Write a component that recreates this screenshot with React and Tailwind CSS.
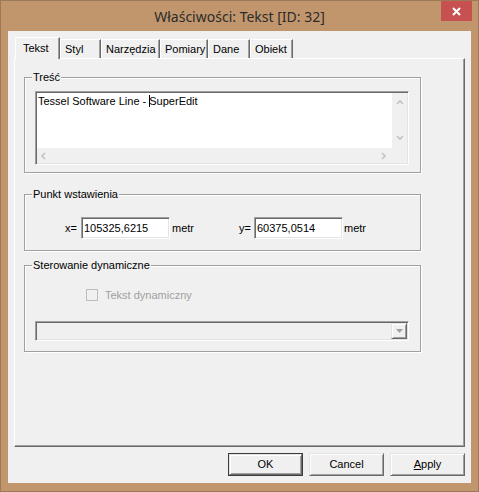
import React from "react";

const tabs = [
  { label: "Tekst", w: "w-[45px]", active: true },
  { label: "Styl", w: "w-[41px]" },
  { label: "Narzędzia", w: "w-[59px]" },
  { label: "Pomiary", w: "w-[48px]" },
  { label: "Dane", w: "w-[42px]" },
  { label: "Obiekt", w: "w-[43px]" },
];

const sunken =
  "border border-t-[#a0a0a0] border-l-[#a0a0a0] border-b-white border-r-white shadow-[inset_1px_1px_0_#696969,inset_-1px_-1px_0_#e3e3e3]";

const raised =
  "border border-t-[#e3e3e3] border-l-[#e3e3e3] border-b-[#696969] border-r-[#696969] shadow-[inset_1px_1px_0_#fff,inset_-1px_-1px_0_#a0a0a0]";

const Chevron = ({ dir }) => {
  const pts = {
    up: "1,5 4,2 7,5",
    down: "1,2 4,5 7,2",
    left: "5,1 2,4 5,7",
    right: "2,1 5,4 2,7",
  }[dir];
  return (
    <svg width="8" height="8" viewBox="0 0 8 8" className="block">
      <polyline points={pts} fill="none" stroke="#c2c2c2" strokeWidth="1.6" />
    </svg>
  );
};

const Group = ({ label, className, children }) => (
  <div
    className={`ml-[9px] w-[397px] border border-[#a0a0a0] shadow-[inset_1px_1px_0_#fff,1px_1px_0_#fff] ${className}`}
  >
    <div className="-mt-[7px] ml-[7px] w-fit bg-[#f0f0f0] px-[1px] leading-[13px]">{label}</div>
    {children}
  </div>
);

const Input = ({ value }) => (
  <div className={`w-[89px] h-[22px] bg-white ${sunken} pl-[2px] flex items-center`}>
    {value}
  </div>
);

export default function App() {
  return (
    <div
      className="w-[479px] h-[492px] bg-[#c2966d] border border-[#9c7a59] flex flex-col text-[11px] text-black"
      style={{ fontFamily: '"Liberation Sans", Arial, sans-serif' }}
    >
      {/* title bar */}
      <div className="h-[30px] flex items-start">
        <div
          className="flex-1 pl-[37px] h-[30px] flex items-center justify-center text-[14px] text-[#2b2b2b]"
          style={{ fontFamily: '"Noto Sans", "Open Sans", sans-serif' }}
        >
          Właściwości: Tekst [ID: 32]
        </div>
        <div className="w-[31px] h-[20px] bg-[#c75050] flex items-center justify-center mr-[6px]">
          <svg width="9" height="9" viewBox="0 0 9 9">
            <path d="M1 1 L8 8 M8 1 L1 8" stroke="#fff" strokeWidth="2" />
          </svg>
        </div>
      </div>

      {/* client */}
      <div className="ml-[7px] w-[463px] h-[452px] bg-[#f0f0f0] pt-[6px] pl-[6px]">
        {/* tabs */}
        <div className="flex items-end h-[21px] pl-[1px] relative z-10">
          {tabs.map((t) =>
            t.active ? (
              <div
                key={t.label}
                className={`${t.w} h-[22px] -mb-[1px] bg-[#f0f0f0] border-t border-l border-white border-r border-r-[#696969] shadow-[inset_-1px_0_0_#a0a0a0] pl-[7px] pt-[4px] leading-[13px]`}
              >
                {t.label}
              </div>
            ) : (
              <div
                key={t.label}
                className={`${t.w} h-[19px] bg-[#f0f0f0] border-t border-l border-white border-r border-r-[#696969] shadow-[inset_-1px_0_0_#a0a0a0] pl-[4px] pt-[3px] leading-[13px]`}
              >
                {t.label}
              </div>
            )
          )}
        </div>

        {/* panel */}
        <div className="w-[451px] h-[389px] border border-white border-r-[#696969] border-b-[#696969] shadow-[inset_-1px_-1px_0_#a0a0a0] pt-[18px]">
          <Group label="Treść" className="h-[96px]">
            <div className={`ml-[10px] mt-[7px] w-[374px] h-[74px] ${sunken} p-[1px] flex flex-col`}>
              <div className="flex h-[55px]">
                <div className="flex-1 bg-white pl-[1px] pt-[2px] leading-[13px]">
                  Tessel Software Line -{" "}
                  <span className="inline-block w-[1px] h-[12px] bg-black align-[-2px] -mr-[1px]" />
                  SuperEdit
                </div>
                <div className="w-[15px] flex flex-col items-center justify-between pt-[6px] pb-[6px]">
                  <Chevron dir="up" />
                  <Chevron dir="down" />
                </div>
              </div>
              <div className="flex h-[15px] items-center">
                <div className="flex-1 flex items-center justify-between pl-[3px] pr-[4px]">
                  <Chevron dir="left" />
                  <Chevron dir="right" />
                </div>
                <div className="w-[15px]" />
              </div>
            </div>
          </Group>

          <Group label="Punkt wstawienia" className="mt-[21px] h-[57px]">
            <div className="mt-[16px] pl-[40px] flex items-center">
              <span className="w-[16px]">x=</span>
              <Input value="105325,6215" />
              <span className="w-[69px] pl-[2px]">metr</span>
              <span className="w-[15px]">y=</span>
              <Input value="60375,0514" />
              <span className="pl-[1px]">metr</span>
            </div>
          </Group>

          <Group label="Sterowanie dynamiczne" className="mt-[14px] h-[87px]">
            <div className="mt-[15px] ml-[61px] flex items-center">
              <div className="w-[12px] h-[12px] border border-[#bcbcbc] bg-[#f0f0f0]" />
              <span className="ml-[7px] text-[#a0a0a0]">Tekst dynamiczny</span>
            </div>
            <div className={`ml-[10px] mt-[17px] w-[374px] h-[20px] ${sunken} p-[1px] flex justify-end`}>
              <div className={`w-[16px] h-[16px] ${raised} flex items-center justify-center`}>
                <svg width="7" height="4" viewBox="0 0 7 4">
                  <polygon points="0,0 7,0 3.5,4" fill="#a0a0a0" />
                </svg>
              </div>
            </div>
          </Group>
        </div>

        {/* buttons */}
        <div className="mt-[6px] pr-[6px] flex justify-end gap-[6px]">
          <div className="w-[75px] h-[23px] border border-[#3c3c3c]">
            <div className={`h-full ${raised} flex items-center justify-center`}>OK</div>
          </div>
          <div className={`w-[75px] h-[23px] ${raised} flex items-center justify-center`}>Cancel</div>
          <div className={`w-[75px] h-[23px] ${raised} flex items-center justify-center`}>
            <span>
              <span className="underline">A</span>pply
            </span>
          </div>
        </div>
      </div>
    </div>
  );
}
